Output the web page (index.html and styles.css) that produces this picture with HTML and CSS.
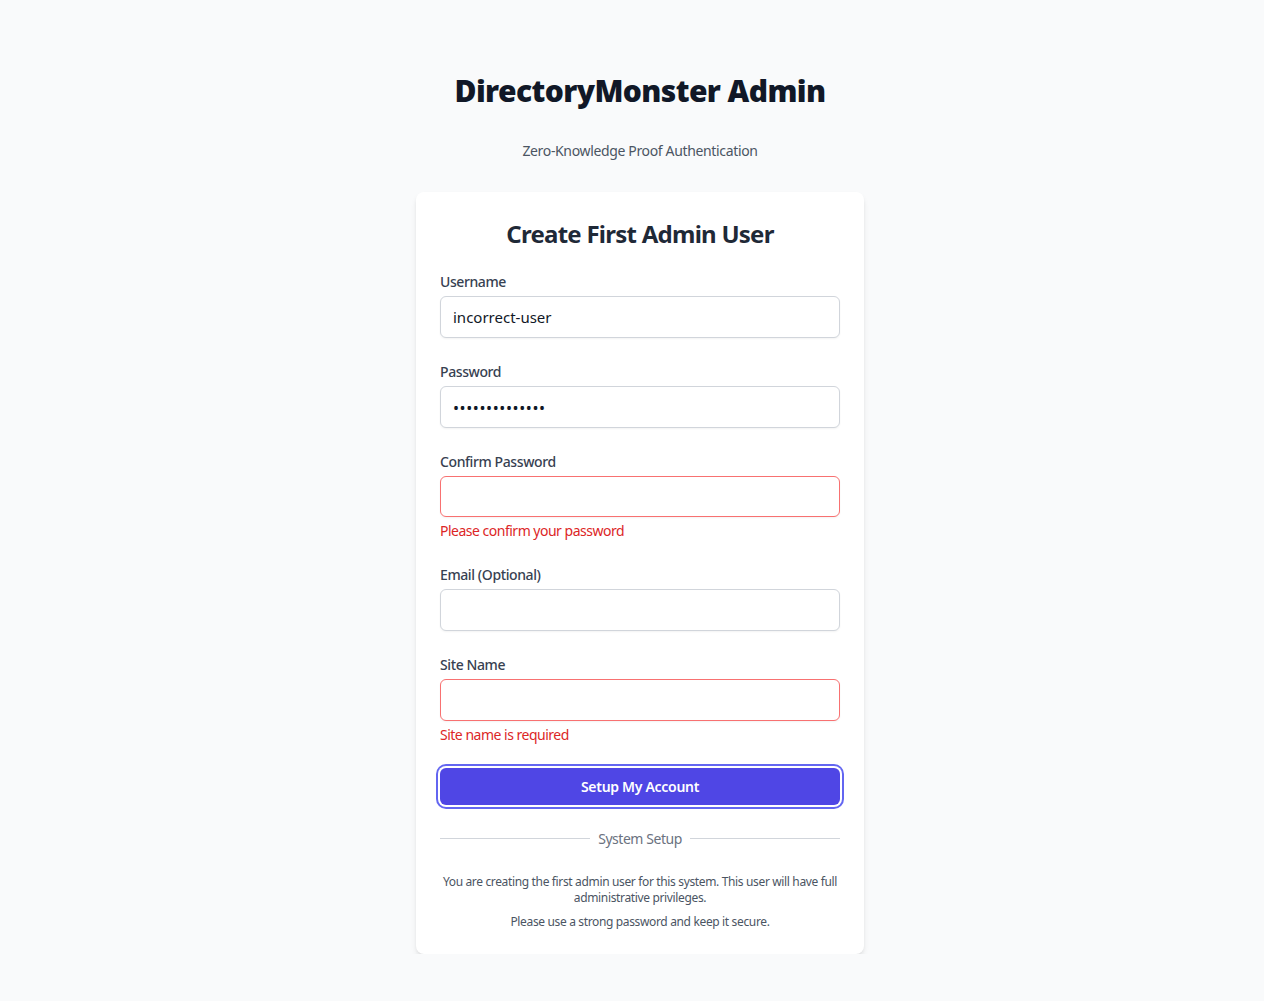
FILE: index.html
```html
<!DOCTYPE html>
<html lang="en">
<head>
<meta charset="utf-8">
<title>DirectoryMonster Admin</title>
<link rel="stylesheet" href="styles.css">
</head>
<body>
<main class="page">
  <header class="head">
    <h1 class="brand">DirectoryMonster Admin</h1>
    <p class="tagline">Zero-Knowledge Proof Authentication</p>
  </header>
  <section class="card">
    <h2 class="card-title">Create First Admin User</h2>
    <form class="form">
      <div class="field">
        <label class="label" for="username">Username</label>
        <input class="input" id="username" type="text" value="incorrect-user">
      </div>
      <div class="field">
        <label class="label" for="password">Password</label>
        <input class="input input-secret" id="password" type="password" value="abcdefghijklmn">
      </div>
      <div class="field">
        <label class="label" for="confirm">Confirm Password</label>
        <input class="input input-error" id="confirm" type="password">
        <p class="error">Please confirm your password</p>
      </div>
      <div class="field">
        <label class="label" for="email">Email (Optional)</label>
        <input class="input" id="email" type="email">
      </div>
      <div class="field">
        <label class="label" for="site">Site Name</label>
        <input class="input input-error" id="site" type="text">
        <p class="error">Site name is required</p>
      </div>
      <button class="submit" type="button">Setup My Account</button>
    </form>
    <div class="divider"><span class="divider-text">System Setup</span></div>
    <div class="notes">
      <p>You are creating the first admin user for this system. This user will have full administrative privileges.</p>
      <p>Please use a strong password and keep it secure.</p>
    </div>
  </section>
</main>
</body>
</html>
```
FILE: styles.css
```css
* { box-sizing: border-box; }
html { overflow: hidden; }
html, body { margin: 0; padding: 0; }
body {
  background: #f9fafb;
  font-family: "Noto Sans", "Open Sans", sans-serif;
  color: #111827;
}
.page {
  display: flex;
  flex-direction: column;
  align-items: center;
  padding: 71px 0 0 16px;
}
.head { text-align: center; }
.brand {
  margin: 0;
  font-size: 30px;
  line-height: 40px;
  font-weight: 900;
  color: #111827;
  letter-spacing: -0.6px;
}
.tagline {
  margin: 30px 0 0;
  font-size: 14px;
  line-height: 20px;
  color: #4b5563;
  letter-spacing: -0.35px;
}
.card {
  margin-top: 31px;
  width: 448px;
  background: #fff;
  border-radius: 8px;
  box-shadow: 0 4px 6px -1px rgba(0,0,0,0.1), 0 2px 4px -2px rgba(0,0,0,0.1);
  padding: 24px;
}
.card-title {
  margin: 2px 0 22px;
  text-align: center;
  font-size: 24px;
  line-height: 32px;
  font-weight: 700;
  color: #1f2937;
  letter-spacing: -0.75px;
}
.form { display: flex; flex-direction: column; gap: 24px; }
.field { display: flex; flex-direction: column; }
.label {
  font-size: 14px;
  line-height: 20px;
  font-weight: 500;
  color: #374151;
  margin-bottom: 4px;
  letter-spacing: -0.4px;
}
.input {
  height: 41.75px;
  width: 100%;
  border: 1px solid #d1d5db;
  border-radius: 6px;
  padding: 0 12px;
  font-family: inherit;
  font-size: 15px;
  color: #111827;
  background: #fff;
  box-shadow: 0 1px 2px 0 rgba(0,0,0,0.05);
  outline: none;
}
.input-secret { letter-spacing: 0.6px; font-size: 16px; padding-top: 3px; }
.input-error { border-color: #f87171; }
.error {
  margin: 4px 0 0;
  font-size: 14px;
  line-height: 20px;
  color: #dc2626;
  letter-spacing: -0.5px;
}
.submit {
  margin-top: -1px;
  height: 37px;
  width: 100%;
  border: none;
  border-radius: 6px;
  background: #4f46e5;
  color: #fff;
  font-family: inherit;
  font-size: 14px;
  font-weight: 600;
  letter-spacing: -0.3px;
  box-shadow: 0 0 0 2px #fff, 0 0 0 4px #6366f1;
}
.divider {
  margin-top: 24px;
  display: flex;
  align-items: center;
  gap: 8px;
}
.divider::before, .divider::after {
  content: "";
  flex: 1;
  height: 1px;
  background: #d1d5db;
}
.divider-text {
  font-size: 14px;
  line-height: 20px;
  color: #6b7280;
  letter-spacing: -0.45px;
}
.notes {
  margin-top: 25px;
  text-align: center;
  font-size: 12px;
  line-height: 16px;
  color: #4b5563;
  letter-spacing: -0.35px;
}
.notes p { margin: 0; }
.notes p + p { margin-top: 8px; }
```
